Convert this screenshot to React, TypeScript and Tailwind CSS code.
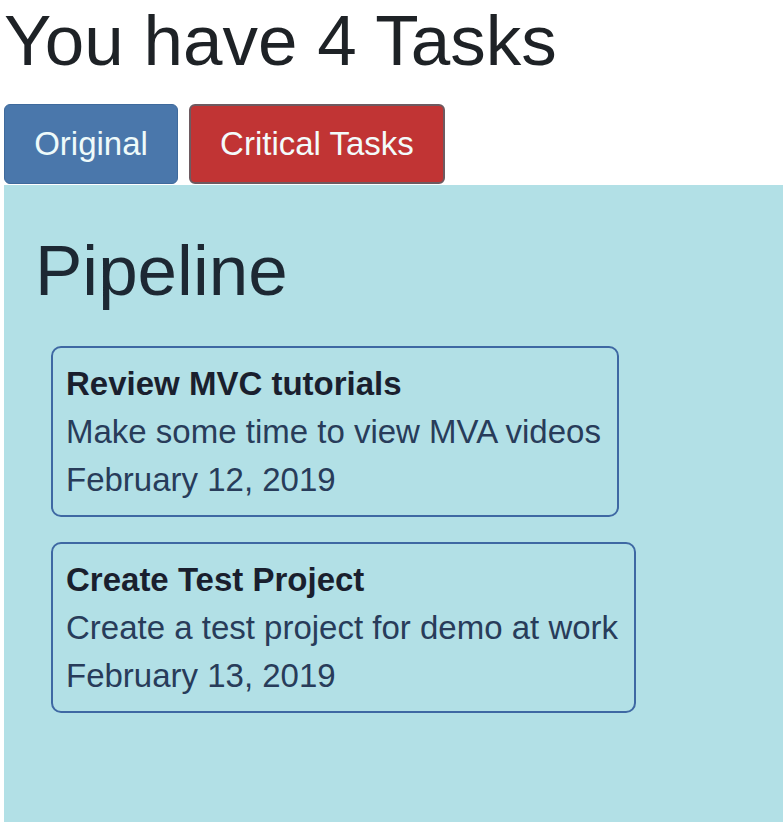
const tasks = [
  { title: "Review MVC tutorials", text: "Make some time to view MVA videos", date: "February 12, 2019" },
  { title: "Create Test Project", text: "Create a test project for demo at work", date: "February 13, 2019" },
];

export default function App() {
  return (
    <div className="min-h-[822px] flex flex-col bg-white font-['Liberation_Sans',Arial,sans-serif]">
      <h1 className="pl-[4px] pt-[1px] text-[71px] leading-[80px] text-[#1e2226]">You have 4 Tasks</h1>
      <div className="mt-[23px] flex gap-[11px] pl-[4px]">
        <button className="h-[80px] w-[174px] rounded-[6px] border border-[#3f6a9c] bg-[#4a77ab] text-[33px] text-[#eefafa]">
          Original
        </button>
        <button className="h-[80px] w-[256px] rounded-[6px] border-2 border-[#6e5a60] bg-[#c13434] text-[33px] text-[#f3fbfb]">
          Critical Tasks
        </button>
      </div>
      <main className="ml-[4px] mt-[1px] flex-1 bg-[#b2e0e6] pl-[31px] pt-[44px]">
        <h2 className="text-[71px] leading-[84px] text-[#1d2833]">Pipeline</h2>
        <div className="mt-[33px] flex flex-col items-start gap-[25px] pl-[16px]">
          {tasks.map((t) => (
            <div key={t.title} className="rounded-[10px] border-2 border-[#3e68a3] pl-[13px] pr-[16px] pt-[12px] pb-[11px] text-[33px] leading-[48px] text-[#283c5a]">
              <div className="font-bold text-[#1a1f2e]">{t.title}</div>
              <div>{t.text}</div>
              <div>{t.date}</div>
            </div>
          ))}
        </div>
      </main>
    </div>
  );
}
